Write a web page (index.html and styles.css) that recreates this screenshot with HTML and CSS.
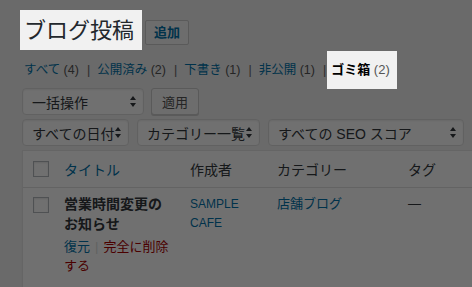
FILE: index.html
```html
<!DOCTYPE html>
<html lang="ja">
<head>
<meta charset="UTF-8" />
<title>ブログ投稿</title>
<link rel="stylesheet" href="styles.css">
</head>
<body>

<div class="dim"></div>

<div class="wrap">
  <div class="head">
    <h1 class="page-title lit">ブログ投稿</h1>
    <a class="add-btn">追加</a>
  </div>

  <ul class="views">
    <li><a>すべて <span class="count">(4)</span></a><span class="sep">|</span></li>
    <li><a>公開済み <span class="count">(2)</span></a><span class="sep">|</span></li>
    <li><a>下書き <span class="count">(1)</span></a><span class="sep">|</span></li>
    <li><a>非公開 <span class="count">(1)</span></a><span class="sep sep-last">|</span></li>
    <li class="lit current"><b>ゴミ箱</b> <span class="count">(2)</span></li>
  </ul>

  <div class="tablenav">
    <div class="nav-row">
      <div class="select sel-bulk"><span>一括操作</span><i class="arrows"></i></div>
      <button class="btn">適用</button>
    </div>
    <div class="nav-row row-filters">
      <div class="select sel-date"><span>すべての日付</span><i class="arrows"></i></div>
      <div class="select sel-cat"><span>カテゴリー一覧</span><i class="arrows"></i></div>
      <div class="select sel-seo"><span>すべての SEO スコア</span><i class="arrows"></i></div>
    </div>
  </div>

  <div class="posts">
    <div class="tr thead">
      <div class="cell check"><span class="box"></span></div>
      <div class="cell"><a>タイトル</a></div>
      <div class="cell">作成者</div>
      <div class="cell">カテゴリー</div>
      <div class="cell">タグ</div>
    </div>
    <div class="tr row">
      <div class="cell check"><span class="box"></span></div>
      <div class="cell col-title">
        <strong>営業時間変更のお知らせ</strong>
        <div class="actions"><a>復元</a><span class="pipe">|</span><a class="delete">完全に削除する</a></div>
      </div>
      <div class="cell col-author"><a>SAMPLE CAFE</a></div>
      <div class="cell col-cat"><a>店舗ブログ</a></div>
      <div class="cell col-tag">—</div>
    </div>
  </div>
</div>

</body>
</html>
```

FILE: styles.css
```css
html, body {
  overflow: hidden;
}
body {
  margin: 0;
  background: #f1f1f1;
  color: #32373c;
  font-family: "Liberation Sans", "Noto Sans CJK JP", sans-serif;
  font-size: 13px;
}
a {
  color: #0073aa;
  text-decoration: none;
}
.dim {
  position: fixed;
  inset: 0;
  background: rgba(0, 0, 0, 0.56);
  z-index: 1;
}
.lit {
  position: relative;
  z-index: 2;
  background: #f1f1f1;
}
.wrap {
  padding: 10px 0 0 20px;
}
.head {
  display: flex;
  align-items: flex-start;
}
.page-title {
  margin: 0;
  padding: 5px 8px 3px 4px;
  font-size: 22px;
  font-weight: 400;
  line-height: 32px;
  color: #23282d;
}
.add-btn {
  margin: 10px 0 0 3px;
  height: 25px;
  box-sizing: border-box;
  padding: 0 8px;
  border: 1px solid #ccc;
  border-radius: 2px;
  background: #f7f7f7;
  font-size: 13px;
  font-weight: 700;
  line-height: 23px;
}
.views {
  display: flex;
  list-style: none;
  margin: 1px 0 0;
  padding: 0 0 0 4px;
  line-height: 38px;
  font-size: 12.5px;
}
.count {
  color: #555;
}
.sep {
  color: #666;
  margin: 0 7px 0 8px;
}
.sep-last {
  margin-right: 1px;
}
.current {
  padding: 0 7px 0 4px;
  font-size: 13px;
}
.current b {
  color: #000;
}
.tablenav {
  margin-top: -1px;
  padding-left: 2px;
}
.nav-row {
  display: flex;
  gap: 7px;
}
.row-filters {
  margin-top: 4px;
  gap: 8px;
}
.select {
  display: flex;
  align-items: center;
  justify-content: space-between;
  height: 27px;
  box-sizing: border-box;
  padding: 0 6px 0 9px;
  background: #fff;
  border: 1px solid #ddd;
  border-radius: 4px;
  box-shadow: inset 0 1px 2px rgba(0, 0, 0, 0.07);
  font-size: 14px;
  color: #32373c;
}
.sel-bulk { width: 122px; }
.sel-date { width: 107px; }
.sel-cat { width: 123px; }
.sel-seo { width: 196px; }
.arrows {
  position: relative;
  width: 7px;
  height: 11px;
}
.arrows::before,
.arrows::after {
  content: "";
  position: absolute;
  left: 0;
  border-left: 3.5px solid transparent;
  border-right: 3.5px solid transparent;
}
.arrows::before {
  top: 0;
  border-bottom: 4px solid #32373c;
}
.arrows::after {
  bottom: 0;
  border-top: 4px solid #32373c;
}
.btn {
  height: 27px;
  padding: 0 10px;
  border: 1px solid #ccc;
  border-radius: 3px;
  background: #f7f7f7;
  box-shadow: 0 1px 0 #ccc;
  font-family: inherit;
  font-size: 13px;
  color: #555;
}
.posts {
  margin: 4px 0 0 2px;
  width: 480px;
  background: #fff;
  border: 1px solid #e5e5e5;
  box-shadow: 0 1px 1px rgba(0, 0, 0, 0.04);
}
.tr {
  display: grid;
  grid-template-columns: 41px 126px 87px 131px 1fr;
}
.thead {
  height: 36px;
  align-items: center;
  border-bottom: 1px solid #e1e1e1;
  font-size: 14px;
  color: #32373c;
}
.box {
  display: block;
  width: 16px;
  height: 16px;
  box-sizing: border-box;
  margin-left: 10px;
  border: 1px solid #b4b9be;
  background: #fff;
  box-shadow: inset 0 1px 2px rgba(0, 0, 0, 0.1);
}
.row {
  padding: 6px 0 12px;
  line-height: 20px;
}
.row .check {
  padding-top: 3px;
}
.col-title {
  padding-right: 20px;
  font-size: 14px;
}
.col-title strong {
  color: #32373c;
}
.actions {
  margin-top: 3px;
  font-size: 13px;
  line-height: 19px;
}
.pipe {
  color: #ddd;
  margin: 0 5px;
}
.delete {
  color: #a00;
}
.col-author {
  padding-right: 10px;
  padding-top: 1px;
  font-size: 12px;
  line-height: 19px;
}
.col-cat {
  font-size: 13px;
}
.col-tag {
  font-size: 13px;
  color: #32373c;
}
```
